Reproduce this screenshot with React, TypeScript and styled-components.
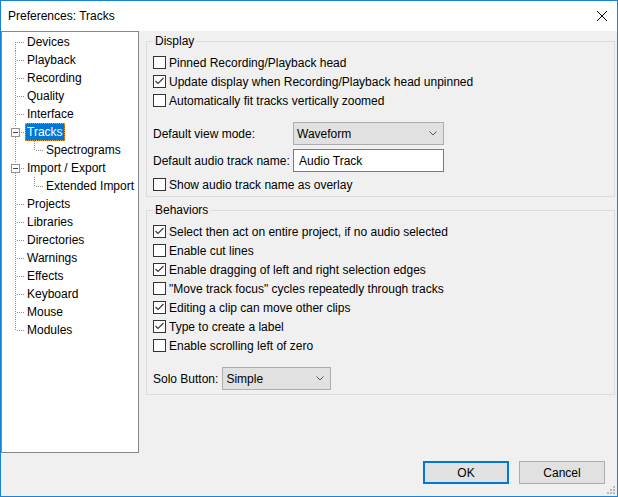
import React from "react";
import styled, { createGlobalStyle } from "styled-components";

const GlobalStyle = createGlobalStyle`
  html, body { margin: 0; padding: 0; background: #ffffff; }
  body {
    font-family: "Liberation Sans", Arial, sans-serif;
    font-size: 12px;
    color: #000;
  }
  * { box-sizing: border-box; }
`;

const Frame = styled.div`
  position: relative;
  width: 618px;
  height: 497px;
  border: 1px solid #1883d7;
  background: #f0f0f0;
  display: flex;
  flex-direction: column;
`;

const TitleBar = styled.div`
  height: 30px;
  flex: none;
  background: #fff;
  display: flex;
  align-items: center;
  justify-content: space-between;
  padding: 0 10px 0 7px;
`;

const Title = styled.span`
  font-size: 12px;
  line-height: 14px;
`;

const Body = styled.div`
  display: flex;
  align-items: flex-start;
  flex: none;
`;

const TreePanel = styled.div`
  width: 138px;
  height: 422px;
  flex: none;
  background: #fff;
  border: 1px solid #828790;
  padding-top: 1px;
  display: flex;
  flex-direction: column;
`;

const TreeRow = styled.div`
  height: 18px;
  display: flex;
  align-items: center;
`;

const TreeLabel = styled.span<{ $selected?: boolean }>`
  height: 18px;
  line-height: 16px;
  padding: 0 1px;
  border: 1px ${(p) => (p.$selected ? "dotted #e89a2a" : "solid transparent")};
  background: ${(p) => (p.$selected ? "#0078d7" : "transparent")};
  color: ${(p) => (p.$selected ? "#fff" : "#000")};
  white-space: nowrap;
`;

const RightPanel = styled.div`
  flex: 1;
  padding: 3px 2px 0 7px;
  display: flex;
  flex-direction: column;
  gap: 6px;
`;

const Group = styled.fieldset<{ $pb: number }>`
  margin: 0;
  min-width: 0;
  border: 1px solid #dcdcdc;
  padding: 5px 6px ${(p) => p.$pb}px 6px;
  display: flex;
  flex-direction: column;
`;

const Legend = styled.legend`
  padding: 0 2px;
  margin: 0;
  font-size: 12px;
  line-height: 14px;
`;

const CheckRow = styled.div`
  height: 19px;
  display: flex;
  align-items: center;
  gap: 3px;
  white-space: nowrap;
`;

const Box = styled.span`
  width: 13px;
  height: 13px;
  flex: none;
  border: 1px solid #333;
  background: #fff;
  display: flex;
`;

const FieldGrid = styled.div`
  display: grid;
  grid-template-columns: 140px 151px;
  row-gap: 4px;
  align-items: center;
  margin-top: 12px;
  margin-bottom: 3px;
`;

const FieldLabel = styled.span`
  white-space: nowrap;
`;

const Combo = styled.div<{ $w: number }>`
  width: ${(p) => p.$w}px;
  height: 23px;
  border: 1px solid #adadad;
  background: #e1e1e1;
  display: flex;
  align-items: center;
  justify-content: space-between;
  padding: 0 6px 0 3px;
`;

const TextField = styled.input`
  width: 151px;
  height: 23px;
  border: 1px solid #7a7a7a;
  background: #fff;
  padding: 0 0 0 5px;
  margin: 0;
  font-family: "Liberation Sans", Arial, sans-serif;
  font-size: 12px;
  color: #000;
  outline: none;
`;

const SoloRow = styled.div`
  display: flex;
  align-items: center;
  gap: 4px;
  margin-top: 12px;
`;

const Footer = styled.div`
  display: flex;
  justify-content: flex-end;
  gap: 10px;
  padding: 8px 12px 0 0;
`;

const Button = styled.button<{ $default?: boolean }>`
  width: 86px;
  height: 23px;
  margin: 0;
  padding: 0;
  background: #e1e1e1;
  border: ${(p) => (p.$default ? "2px solid #0078d7" : "1px solid #adadad")};
  font-family: "Liberation Sans", Arial, sans-serif;
  font-size: 12px;
  color: #000;
`;

const Grip = styled.svg`
  position: absolute;
  right: 2px;
  bottom: 2px;
`;

const Check = ({ checked, children }: { checked?: boolean; children: React.ReactNode }) => (
  <CheckRow>
    <Box>
      {checked && (
        <svg width="11" height="11" viewBox="0 0 11 11">
          <polyline points="1.5,5 4,7.5 9.5,2" fill="none" stroke="#333" strokeWidth="1.1" />
        </svg>
      )}
    </Box>
    <span>{children}</span>
  </CheckRow>
);

const Chevron = () => (
  <svg width="8" height="5" viewBox="0 0 8 5">
    <polyline points="0.5,0.5 4,4 7.5,0.5" fill="none" stroke="#555" strokeWidth="1" />
  </svg>
);

type Item = {
  label: string;
  level: number;
  first?: boolean;
  last?: boolean;
  expander?: boolean;
  selected?: boolean;
};

const items: Item[] = [
  { label: "Devices", level: 0, first: true },
  { label: "Playback", level: 0 },
  { label: "Recording", level: 0 },
  { label: "Quality", level: 0 },
  { label: "Interface", level: 0 },
  { label: "Tracks", level: 0, expander: true, selected: true },
  { label: "Spectrograms", level: 1, last: true },
  { label: "Import / Export", level: 0, expander: true },
  { label: "Extended Import", level: 1, last: true },
  { label: "Projects", level: 0 },
  { label: "Libraries", level: 0 },
  { label: "Directories", level: 0 },
  { label: "Warnings", level: 0 },
  { label: "Effects", level: 0 },
  { label: "Keyboard", level: 0 },
  { label: "Mouse", level: 0 },
  { label: "Modules", level: 0, last: true },
];

const DOT = "#8c8c8c";

const Connector = ({ item }: { item: Item }) => {
  const w = item.level === 0 ? 23 : 42;
  const lines: React.ReactNode[] = [];
  const dash = { stroke: DOT, strokeWidth: 1, strokeDasharray: "1 1", shapeRendering: "crispEdges" as const };
  if (item.level === 0) {
    const top = item.first ? 9 : 0;
    const bottom = item.last ? 10 : 18;
    if (item.expander) {
      lines.push(<line key="v1" x1="13.5" y1={top} x2="13.5" y2="4" {...dash} />);
      lines.push(<line key="v2" x1="13.5" y1="14" x2="13.5" y2={bottom} {...dash} />);
      lines.push(<line key="h" x1="19" y1="9.5" x2="23" y2="9.5" {...dash} />);
      lines.push(
        <rect key="b" x="9.5" y="5.5" width="8" height="8" fill="#fff" stroke="#939393" shapeRendering="crispEdges" />
      );
      lines.push(<line key="m" x1="11" y1="9.5" x2="16" y2="9.5" stroke="#444" shapeRendering="crispEdges" />);
    } else {
      lines.push(<line key="v" x1="13.5" y1={top} x2="13.5" y2={bottom} {...dash} />);
      lines.push(<line key="h" x1="15" y1="9.5" x2="23" y2="9.5" {...dash} />);
    }
  } else {
    lines.push(<line key="p" x1="13.5" y1="0" x2="13.5" y2="18" {...dash} />);
    lines.push(<line key="v" x1="32.5" y1="0" x2="32.5" y2="10" {...dash} />);
    lines.push(<line key="h" x1="34" y1="9.5" x2="42" y2="9.5" {...dash} />);
  }
  return (
    <svg width={w} height="18" viewBox={`0 0 ${w} 18`} style={{ flex: "none" }}>
      {lines}
    </svg>
  );
};

export default function App() {
  return (
    <>
      <GlobalStyle />
      <Frame>
        <TitleBar>
          <Title>Preferences: Tracks</Title>
          <svg width="10" height="10" viewBox="0 0 10 10">
            <line x1="0" y1="0" x2="10" y2="10" stroke="#000" strokeWidth="1" />
            <line x1="10" y1="0" x2="0" y2="10" stroke="#000" strokeWidth="1" />
          </svg>
        </TitleBar>
        <Body>
          <TreePanel>
            {items.map((it) => (
              <TreeRow key={it.label}>
                <Connector item={it} />
                <TreeLabel $selected={it.selected}>{it.label}</TreeLabel>
              </TreeRow>
            ))}
          </TreePanel>
          <RightPanel>
            <Group $pb={2}>
              <Legend>Display</Legend>
              <Check>Pinned Recording/Playback head</Check>
              <Check checked>Update display when Recording/Playback head unpinned</Check>
              <Check>Automatically fit tracks vertically zoomed</Check>
              <FieldGrid>
                <FieldLabel>Default view mode:</FieldLabel>
                <Combo $w={151}>
                  <span>Waveform</span>
                  <Chevron />
                </Combo>
                <FieldLabel>Default audio track name:</FieldLabel>
                <TextField defaultValue="Audio Track" />
              </FieldGrid>
              <Check>Show audio track name as overlay</Check>
            </Group>
            <Group $pb={4}>
              <Legend>Behaviors</Legend>
              <Check checked>Select then act on entire project, if no audio selected</Check>
              <Check>Enable cut lines</Check>
              <Check checked>Enable dragging of left and right selection edges</Check>
              <Check>"Move track focus" cycles repeatedly through tracks</Check>
              <Check checked>Editing a clip can move other clips</Check>
              <Check checked>Type to create a label</Check>
              <Check>Enable scrolling left of zero</Check>
              <SoloRow>
                <FieldLabel>Solo Button:</FieldLabel>
                <Combo $w={109}>
                  <span>Simple</span>
                  <Chevron />
                </Combo>
              </SoloRow>
            </Group>
          </RightPanel>
        </Body>
        <Footer>
          <Button $default>OK</Button>
          <Button>Cancel</Button>
        </Footer>
        <Grip width="9" height="9" viewBox="0 0 9 9">
          {[
            [7, 1],
            [4, 4],
            [7, 4],
            [1, 7],
            [4, 7],
            [7, 7],
          ].map(([x, y]) => (
            <rect key={`${x}-${y}`} x={x} y={y} width="2" height="2" fill="#b9b9b9" />
          ))}
        </Grip>
      </Frame>
    </>
  );
}
